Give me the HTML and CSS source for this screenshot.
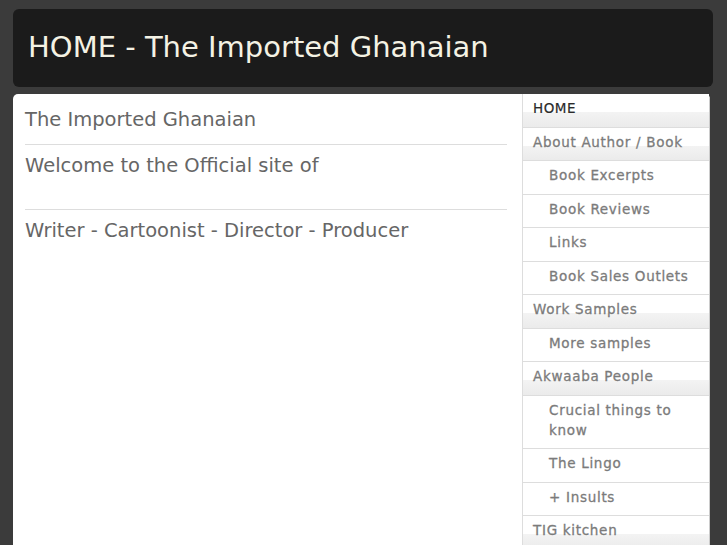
FILE: index.html
```html
<!DOCTYPE html>
<html>
<head>
<meta charset="utf-8">
<link rel="stylesheet" href="styles.css">
</head>
<body>
<div class="page">
  <header class="masthead"><h1 class="site-title">HOME - The Imported Ghanaian</h1></header>
  <div class="main">
    <div class="content">
      <p class="block">The Imported Ghanaian</p>
      <p class="block tall">Welcome to the Official site of</p>
      <p class="block">Writer - Cartoonist - Director - Producer</p>
    </div>
    <nav class="nav">
      <a class="item top current">HOME</a>
      <a class="item top">About Author / Book</a>
      <a class="item sub">Book Excerpts</a>
      <a class="item sub">Book Reviews</a>
      <a class="item sub">Links</a>
      <a class="item sub">Book Sales Outlets</a>
      <a class="item top">Work Samples</a>
      <a class="item sub">More samples</a>
      <a class="item top">Akwaaba People</a>
      <a class="item sub">Crucial things to know</a>
      <a class="item sub">The Lingo</a>
      <a class="item sub">+ Insults</a>
      <a class="item top">TIG kitchen</a>
    </nav>
  </div>
</div>
</body>
</html>
```
FILE: styles.css
```css
html, body { margin: 0; padding: 0; }
body {
  background: #3b3b3b;
  font-family: "DejaVu Sans", Verdana, sans-serif;
  height: 545px;
  overflow: hidden;
}
.page { padding: 9px 14px 0 13px; }
.masthead {
  background: #1b1b1b;
  border-radius: 6px;
  height: 78px;
  display: flex;
  align-items: center;
  padding: 0 15px;
  box-sizing: border-box;
}
.site-title {
  margin: 0;
  font-family: "DejaVu Sans", sans-serif;
  font-weight: normal;
  font-size: 29px;
  color: #f4f2e4;
  position: relative;
  top: -1px;
}
.main {
  margin-top: 7px;
  margin-right: 3px;
  background: #fff;
  border-radius: 5px 5px 0 0;
  display: flex;
  height: 500px;
}
.content {
  flex: 1;
  padding: 13px 15px 0 12px;
}
.block {
  margin: 0;
  font-size: 19.5px;
  color: #666;
  line-height: 26px;
  padding: 0 0 11px 0;
  border-bottom: 1px solid #ddd;
  margin-bottom: 8px;
}
.block.tall { padding-bottom: 30px; }
.block:last-child { border-bottom: none; }
.nav {
  width: 186px;
  border-left: 1px solid #ddd;
  border-right: 1px solid #ccc;
  border-radius: 0 5px 0 0;
  display: flex;
  flex-direction: column;
}
.item {
  display: block;
  font-size: 13.5px;
  letter-spacing: 0.7px;
  color: #7b7b7b;
  -webkit-text-stroke: 0.3px #7b7b7b;
  line-height: 20px;
  border-bottom: 1px solid #ddd;
  text-decoration: none;
  padding: 4px 10px 8.5px 10px;
}
.item.top {
  background: linear-gradient(#fff 0, #fff 56%, #f3f3f3 56%, #ebebeb 100%);
}
.item.sub {
  padding-left: 26px;
  background: #fff;
}
.item.current {
  color: #2b2b2b;
  -webkit-text-stroke: 0.2px #2b2b2b;
  letter-spacing: 0.5px;
}
```
